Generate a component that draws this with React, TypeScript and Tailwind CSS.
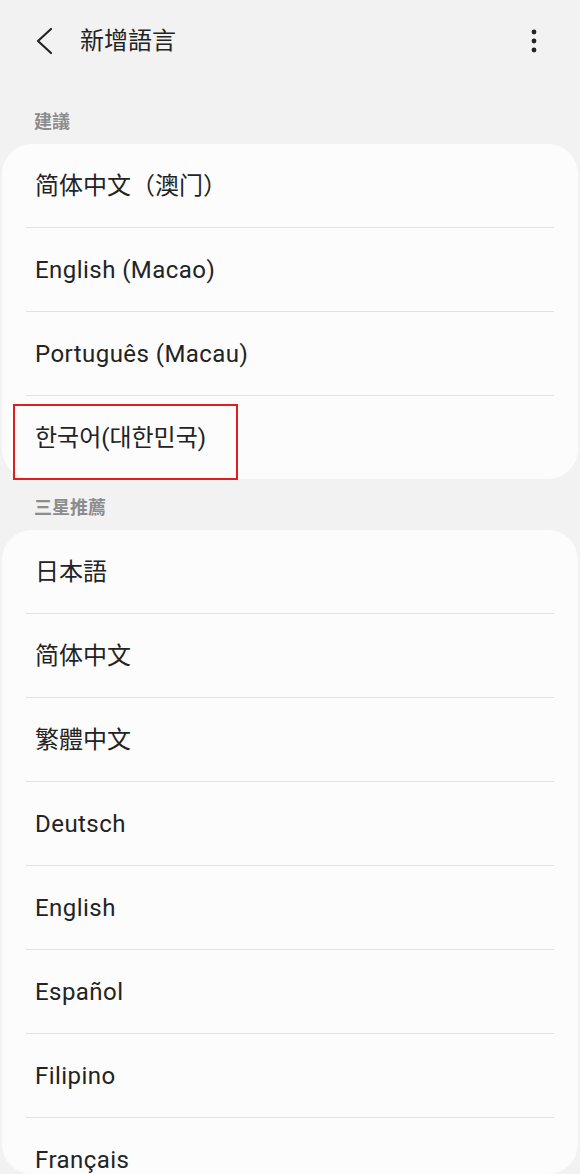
import React from 'react';

const FONT = "font-['Roboto','Noto_Sans_CJK_TC',sans-serif]";

interface LangRow {
  label: string;
  font?: string;
  latin?: boolean;
  marked?: boolean;
}

const suggested: LangRow[] = [
  { label: '简体中文（澳门）', font: "font-['Roboto','Noto_Sans_CJK_SC',sans-serif]" },
  { label: 'English (Macao)', latin: true },
  { label: 'Português (Macau)', latin: true },
  { label: '한국어(대한민국)', font: "font-['Roboto','Noto_Sans_CJK_KR',sans-serif]", marked: true },
];

const samsung: LangRow[] = [
  { label: '日本語', font: "font-['Roboto','Noto_Sans_CJK_JP',sans-serif]" },
  { label: '简体中文', font: "font-['Roboto','Noto_Sans_CJK_SC',sans-serif]" },
  { label: '繁體中文' },
  { label: 'Deutsch', latin: true },
  { label: 'English', latin: true },
  { label: 'Español', latin: true },
  { label: 'Filipino', latin: true },
  { label: 'Français', latin: true },
];

const SectionLabel = ({ text, className }: { text: string; className: string }) => (
  <div className={`px-[34px] ${className}`}>
    <span className="text-[18px] leading-[24px] font-semibold text-[#8c8c8c]">{text}</span>
  </div>
);

const Row = ({ row, last }: { row: LangRow; last: boolean }) => (
  <>
    <div className="relative h-[83px] shrink-0 flex items-center pl-[33px]">
      <span className={`text-[24px] text-[#232323] ${row.latin ? 'tracking-[0.45px]' : ''} ${row.font ?? ''}`}>
        {row.label}
      </span>
      {row.marked && (
        <div className="absolute left-[11px] top-[8px] w-[225px] h-[76px] border-2 border-[#e01e1e]" />
      )}
    </div>
    {!last && <div className="h-px shrink-0 mx-[24px] bg-[#e2e2e2]" />}
  </>
);

export default function App() {
  return (
    <div className={`${FONT} w-[580px] h-[1174px] bg-[#f2f2f2] flex flex-col overflow-hidden`}>
      {/* Header */}
      <div className="h-[82px] shrink-0 flex items-center pl-[33px] pr-[34px]">
        <svg width="22" height="30" viewBox="0 0 22 30" fill="none">
          <polyline points="18,3 5,15 18,27" stroke="#232323" strokeWidth="2.2" strokeLinecap="round" strokeLinejoin="round" />
        </svg>
        <h1 className="ml-[25px] text-[24px] font-normal text-[#232323]">新增語言</h1>
        <svg className="ml-auto" width="24" height="30" viewBox="0 0 24 30">
          <circle cx="12" cy="6" r="2.4" fill="#232323" />
          <circle cx="12" cy="15" r="2.4" fill="#232323" />
          <circle cx="12" cy="24" r="2.4" fill="#232323" />
        </svg>
      </div>

      <SectionLabel text="建議" className="pt-[28px] pb-[9px]" />
      <div className="mx-[2px] shrink-0 bg-[#fcfcfc] rounded-[30px] flex flex-col">
        {suggested.map((r, i) => (
          <Row key={r.label} row={r} last={i === suggested.length - 1} />
        ))}
      </div>

      <SectionLabel text="三星推薦" className="pt-[17px] pb-[9px]" />
      <div className="mx-[2px] flex-1 min-h-0 overflow-hidden bg-[#fcfcfc] rounded-[30px] flex flex-col">
        {samsung.map((r, i) => (
          <Row key={r.label} row={r} last={i === samsung.length - 1} />
        ))}
      </div>
    </div>
  );
}
